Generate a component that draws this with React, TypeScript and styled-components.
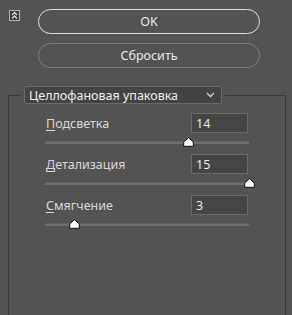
import React from 'react';
import styled, { createGlobalStyle } from 'styled-components';

const GlobalStyle = createGlobalStyle`
  html, body {
    margin: 0;
    padding: 0;
    background: #535353;
    overflow: hidden;
  }
  body {
    font-family: "Noto Sans", "Open Sans", sans-serif;
    font-size: 12.5px;
    color: #dedede;
  }
`;

type Setting = {
  label: string;
  key: string;
  value: number;
  min: number;
  max: number;
};

const settings: Setting[] = [
  { label: 'Подсветка', key: 'П', value: 14, min: 0, max: 20 },
  { label: 'Детализация', key: 'Д', value: 15, min: 1, max: 15 },
  { label: 'Смягчение', key: 'С', value: 3, min: 1, max: 15 },
];

const CollapseIcon = () => (
  <IconBox>
    <svg width="9" height="9" viewBox="0 0 9 9">
      <path d="M2 4 L4.5 1.5 L7 4" fill="none" stroke="#dcdcdc" strokeWidth="1.3" />
      <path d="M2 7.5 L4.5 5 L7 7.5" fill="none" stroke="#dcdcdc" strokeWidth="1.3" />
    </svg>
  </IconBox>
);

const Chevron = () => (
  <svg width="9" height="6" viewBox="0 0 9 6">
    <path d="M1 1 L4.5 4.5 L8 1" fill="none" stroke="#cfcfcf" strokeWidth="1.3" />
  </svg>
);

const Thumb = () => (
  <svg width="11" height="10" viewBox="0 0 11 10">
    <polygon points="5.5,0.7 10.3,5 10.3,9.3 0.7,9.3 0.7,5" fill="#ffffff" stroke="#111" strokeWidth="1" />
  </svg>
);

const SliderRow = ({ s }: { s: Setting }) => {
  const pct = ((s.value - s.min) / (s.max - s.min)) * 100;
  return (
    <>
      <Row>
        <Label>
          <u>{s.key}</u>
          {s.label.slice(1)}
        </Label>
        <NumberBox>{s.value}</NumberBox>
      </Row>
      <Slider>
        <Track />
        <ThumbHolder style={{ left: `${pct}%` }}>
          <Thumb />
        </ThumbHolder>
      </Slider>
    </>
  );
};

const App = () => {
  return (
    <Page>
      <GlobalStyle />
      <Top>
        <CollapseIcon />
        <Buttons>
          <PillButton $primary>OK</PillButton>
          <PillButton>Сбросить</PillButton>
        </Buttons>
      </Top>
      <Group>
        <Legend>
          <Select>
            <span>Целлофановая упаковка</span>
            <Chevron />
          </Select>
        </Legend>
        <GroupBody>
          {settings.map((s) => (
            <SliderRow key={s.label} s={s} />
          ))}
        </GroupBody>
      </Group>
    </Page>
  );
};

// styling

const Page = styled.div`
  height: 315px;
  overflow: hidden;
`;

const Top = styled.div`
  display: flex;
  align-items: flex-start;
  padding: 9px 0 0 9px;
`;

const IconBox = styled.div`
  width: 11px;
  height: 11px;
  box-sizing: border-box;
  margin-top: 1px;
  border: 1px solid #b4b4b4;
  background: #3a3a3a;
  display: flex;
  align-items: center;
  justify-content: center;
`;

const Buttons = styled.div`
  display: flex;
  flex-direction: column;
  gap: 9px;
  width: 222px;
  margin-left: 18px;
`;

const PillButton = styled.div<{ $primary?: boolean }>`
  height: 25px;
  box-sizing: border-box;
  border-radius: 13px;
  border: ${(p) => (p.$primary ? '1.5px solid #dcdcdc' : '1px solid #7c7c7c')};
  display: flex;
  align-items: center;
  justify-content: center;
  color: #e8e8e8;
`;

const Group = styled.fieldset`
  margin: 18px 0 0 8px;
  padding: 0;
  width: 278px;
  height: 240px;
  box-sizing: border-box;
  border: 1px solid #3b3b3b;
  min-inline-size: 0;
`;

const Legend = styled.legend`
  margin-left: 12px;
  padding: 0 3px;
`;

const Select = styled.div`
  width: 198px;
  height: 18px;
  box-sizing: border-box;
  background: #444444;
  border: 1px solid #6a6a6a;
  border-radius: 2px;
  display: flex;
  align-items: center;
  justify-content: space-between;
  padding: 0 6px 0 4px;
  color: #ececec;
`;

const GroupBody = styled.div`
  padding: 9px 37px 0 37px;
`;

const Row = styled.div`
  display: flex;
  align-items: center;
  justify-content: space-between;
  height: 20px;
`;

const Label = styled.span`
  color: #d8d8d8;
  u {
    text-decoration-thickness: 1px;
    text-underline-offset: 2px;
  }
`;

const NumberBox = styled.div`
  width: 57px;
  height: 20px;
  box-sizing: border-box;
  background: #454545;
  border: 1px solid #6b6b6b;
  padding-left: 4px;
  display: flex;
  align-items: center;
  color: #eaeaea;
`;

const Slider = styled.div`
  position: relative;
  height: 21px;
  margin: 0 -1px;
`;

const Track = styled.div`
  position: relative;
  top: 8px;
  height: 3px;
  background: #6e6e6e;
  border-top: 1px solid #5f5f5f;
  box-sizing: border-box;
`;

const ThumbHolder = styled.div`
  position: absolute;
  top: 4px;
  width: 11px;
  height: 10px;
  margin-left: -5px;
  line-height: 0;
`;

export default App;
